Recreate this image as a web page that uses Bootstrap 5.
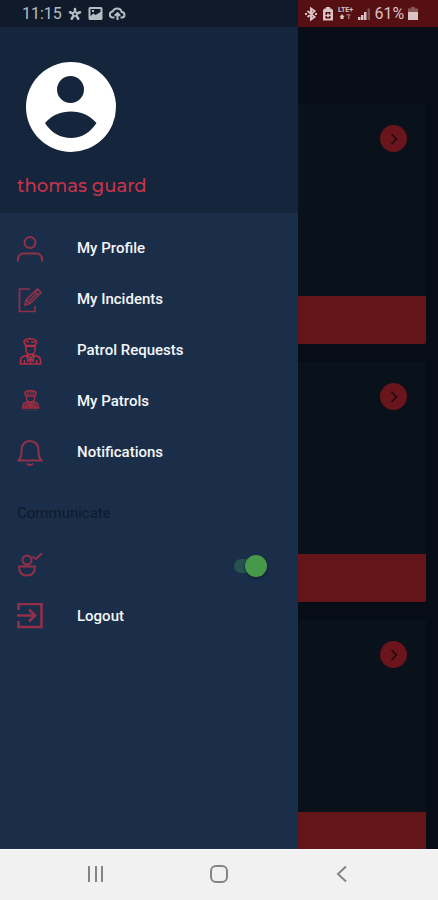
<!DOCTYPE html>
<html lang="en">
<head>
<meta charset="utf-8">
<meta name="viewport" content="width=device-width, initial-scale=1">
<title>Guard menu</title>
<link rel="stylesheet" href="https://cdn.jsdelivr.net/npm/bootstrap@5.3.0/dist/css/bootstrap.min.css">
<style>
  body { font-family: Roboto, sans-serif; background: #060d16; }
  svg { display: block; flex: none; }
  .status { height: 27px; font-size: 16px; line-height: 27px; }
  .status-left { width: 68%; background: #0f1b2a; color: #b6bcc4; padding-left: 22px; gap: 6px; }
  .status-right { background: #560f12; color: #d9c3c3; padding: 0 20px 0 6px; }
  .screen { min-height: 0; }
  .drawer { width: 68%; background: #1b2e49; }
  .drawer-head { height: 186px; padding: 35px 17px 0; background: #15253c; }
  .avatar { margin-left: 8px; }
  .user-name { margin-top: 20px; font-family: Montserrat, Inter, sans-serif; font-size: 18px; line-height: 24px; font-weight: 500; color: #c6344b; }
  .menu { padding-top: 10px; }
  .menu-row { height: 51px; padding: 0 36px 0 17px; gap: 34px; color: #f4f6f9; font-size: 15px; font-weight: 500; text-decoration: none; }
  .menu-row svg { color: #92304a; fill: none; stroke: currentColor; stroke-width: 2; }
  .menu-row .vivid { color: #b52d40; }
  .section-title { margin: 6px 0 0; height: 56px; padding-left: 17px; border-top: 1px solid #192b44; font-size: 15px; line-height: 56px; color: #0e1a2b; font-weight: 400; }
  .duty-switch { appearance: none; position: relative; width: 28px; height: 14px; margin: 0; border-radius: 7px; background: #285150; }
  .duty-switch::before { content: ""; position: absolute; right: -5px; top: -4px; width: 22px; height: 22px; border-radius: 50%; background: #46984a; box-shadow: 0 1px 3px #0f1d30; }
  .duty-switch:not(:checked)::before { right: auto; left: -5px; background: #9aa3ad; }
  .tiles { padding: 77px 12px 0 0; gap: 18px; }
  .tile { height: 240px; flex: none; background: #09111b; }
  .tile-go { width: 27px; height: 27px; margin: 21px 19px 0 0; background: #6a141b; color: #1c0a10; }
  .tile-strip { height: 48px; background: #631519; border-radius: 0 0 2px 0; }
  .sys-nav { height: 51px; background: #f1f1f1; border-top: 1px solid #fafafa; padding: 0 34px 2px; }
  .sys-nav svg { fill: none; stroke: #858585; stroke-width: 2; }
</style>
<script src="https://cdn.jsdelivr.net/npm/bootstrap@5.3.0/dist/js/bootstrap.bundle.min.js"></script>
</head>
<body class="d-flex flex-column vh-100 overflow-hidden">

<header class="status d-flex flex-shrink-0">
  <div class="status-left d-flex align-items-center">
    <span>11:15</span>
    <svg width="14" height="14" viewBox="0 0 14 14" fill="none" stroke="currentColor" stroke-width="2.600" stroke-linecap="round"><path d="M7 4.500V2M9 6.500l3-1.200M8.500 9l1.800 2.700M5.500 9l-1.800 2.700M5 6.500L2 5.300"/><circle cx="7" cy="7" r="2" stroke-width="1.500"/></svg>
    <svg width="15" height="14" viewBox="0 0 15 14"><path fill="currentColor" fill-rule="evenodd" d="M2 0h11a1.500 1.500 0 0 1 1.500 1.500v10A1.500 1.500 0 0 1 13 13H2a1.500 1.500 0 0 1-1.500-1.500v-10A1.500 1.500 0 0 1 2 0zM2.500 2v7l3-2.500 2 1.500 5-3V2zM4 3h2v2H4z"/></svg>
    <svg width="17" height="14" viewBox="0 0 17 14" fill="none" stroke="currentColor" stroke-width="2"><path d="M5.500 10.500H4a3 3 0 0 1-.3-6C4.500 2.500 6.200 1.500 8.200 1.500c2.300 0 4 1.500 4.500 3.500 3.500.2 3.800 5.200.3 5.500h-1.500M8.500 13V6.500M5.800 8.800l2.700-2.700 2.700 2.700"/></svg>
  </div>
  <div class="status-right d-flex flex-fill align-items-center justify-content-between">
    <svg width="14" height="14" viewBox="0 0 14 14" fill="none" stroke="currentColor" stroke-width="2"><path d="M3.500 4l7 6L7 12.500v-11L10.500 4l-7 6M1 7h2M11 7h2"/></svg>
    <svg width="12" height="14" viewBox="0 0 12 14"><path fill="currentColor" fill-rule="evenodd" d="M4 0h4v1.500h1.500L11 3v10.500H1V3l1.500-1.500H4zM3.500 5v3H5V6.500h2V8L8.500 7V5zM3.500 9v2.500h5V9H7v1H5V9z"/></svg>
    <svg width="16" height="15" viewBox="0 0 16 15" fill="currentColor"><text x="0" y="6" font-size="7" font-weight="700">LTE+</text><path d="M4 8l2.500 3H5.500v2h-3v-2H1.500z"/><path d="M8.500 8h4v1.500h-1V13H10V9.500H8.500z" opacity=".5"/></svg>
    <svg width="13" height="13" viewBox="0 0 13 13" fill="currentColor"><path d="M0 10h2.500v3H0zM3 8h2.500v5H3zM6 5h2.500v8H6z"/><path opacity=".35" d="M9.500 1.500h2.500V13H9.500z"/></svg>
    <span>61%</span>
    <svg width="10" height="14" viewBox="0 0 10 14" fill="currentColor"><path opacity=".4" d="M3 0h4v1.500h3V6H0V1.500h3z"/><path d="M0 5h10v8H0z"/></svg>
  </div>
</header>

<div class="screen d-flex flex-fill">
  <aside class="drawer flex-shrink-0">
    <div class="drawer-head">
      <svg class="avatar" width="92" height="92" viewBox="0 0 92 92"><circle cx="46" cy="45" r="45" fill="#fff"/><circle cx="45.500" cy="27.500" r="13.500" fill="#15253c"/><path fill="#15253c" d="M20 61c7-8 16-11.500 26-11.500S64 53 71.500 61C65 71 56 76 46 76S26 71 20 61z"/></svg>
      <div class="user-name">thomas guard</div>
    </div>
    <nav class="menu" aria-label="Main menu">
      <a class="menu-row d-flex align-items-center" href="#">
        <svg width="26" height="26" viewBox="0 0 26 26"><circle cx="13" cy="6.500" r="5.500"/><path d="M1 25.500v-2.500a5.500 5.500 0 0 1 5.500-5.500h13A5.500 5.500 0 0 1 25 23v2.500"/></svg>
        <span>My Profile</span>
      </a>
      <a class="menu-row d-flex align-items-center" href="#">
        <svg width="26" height="26" viewBox="0 0 26 26"><path stroke-width="1.700" d="M13 2H2.500v22.500H18V19M8 18l1-5L20.500 2l3.500 3.500L13 16.500zM18 4.500L21.500 8M9 13l4 3.500M12 14l8-8"/></svg>
        <span>My Incidents</span>
      </a>
      <a class="menu-row d-flex align-items-center" href="#">
        <svg class="vivid" width="26" height="28" viewBox="0 0 26 28"><g stroke-width="1.500"><path d="M7.500 6C6 4 8 2 13 1.500c5 .5 8 2.500 6 5l-1 2H8.500zM8.500 8.500c3 1.200 7 1.200 10 0M9 9v4c0 2.500 2 4.500 4.500 4.500S18 15.500 18 13V9M11 16.500v2l2.500 3 2.500-3v-2M11 18l-5 1.500c-2 .7-2.500 2-2.500 4V27h20v-3.500c0-2-.5-3.300-2.500-4L16 18M7.500 27v-4M19.500 27v-4M10 19l1 5 2.500-2.500L16 24l1-5M13.500 22v5"/><path d="M9 4.500h3M14 5h4"/></g></svg>
        <span>Patrol Requests</span>
      </a>
      <a class="menu-row d-flex align-items-center" href="#">
        <svg width="26" height="28" viewBox="0 0 26 28"><g stroke-width="1.400" color="#a32d42"><path fill="currentColor" fill-opacity=".45" d="M8 6c-1-2 1-3 5.500-3.500C18 3 20 4 19 6l-1 2H9zM5.500 20c0-3 .5-5 3-5.500l3-1 2 2 2-2 3 1c2.500.5 3 2.500 3 5.500z"/><path d="M9.500 8v2.500c0 2 1.800 3.500 4 3.500s4-1.500 4-3.500V8M10 15l1.500 3 2-2 2 2 1.500-3M13.500 16v4M9 17v3M18 17v3"/></g><path stroke-width="1" opacity=".3" d="M5 22.500h17"/></svg>
        <span>My Patrols</span>
      </a>
      <a class="menu-row d-flex align-items-center" href="#">
        <svg width="26" height="28" viewBox="0 0 26 28"><path stroke-width="2" d="M1.500 21.500C4 18.500 4.500 17 4.500 11c0-5.500 3.500-9 8.500-9s8.500 3.500 8.500 9c0 6 .5 7.500 3 10.500zM10 24.500c1.500 2 4.500 2 6 0"/></svg>
        <span>Notifications</span>
      </a>
      <h2 class="section-title">Communicate</h2>
      <label class="menu-row d-flex align-items-center justify-content-between">
        <svg width="26" height="26" viewBox="0 0 26 26"><circle cx="10" cy="7" r="4.500"/><path d="M2 13.500h16c0 5.500-2.500 9-8 9s-8-3.500-8-9zM15.500 3.500L19 6l6-6"/></svg>
        <input class="duty-switch" type="checkbox" role="switch" aria-label="On duty" checked>
      </label>
      <a class="menu-row d-flex align-items-center" href="#">
        <svg width="26" height="28" viewBox="0 0 26 28"><path stroke-width="2.600" d="M1.500 7V1h23v23h-23v-6M0 12.500h17M12 6.500l6 6-6 6"/></svg>
        <span>Logout</span>
      </a>
    </nav>
  </aside>

  <main class="tiles d-flex flex-column flex-fill overflow-hidden">
    <section class="tile d-flex flex-column justify-content-between">
      <button class="tile-go btn p-0 rounded-circle d-flex align-items-center justify-content-center align-self-end" type="button" aria-label="Open"><svg width="8" height="12" viewBox="0 0 8 12" fill="none" stroke="currentColor" stroke-width="1.500"><path d="M1.500 1l5 5-5 5"/></svg></button>
      <div class="tile-strip"></div>
    </section>
    <section class="tile d-flex flex-column justify-content-between">
      <button class="tile-go btn p-0 rounded-circle d-flex align-items-center justify-content-center align-self-end" type="button" aria-label="Open"><svg width="8" height="12" viewBox="0 0 8 12" fill="none" stroke="currentColor" stroke-width="1.500"><path d="M1.500 1l5 5-5 5"/></svg></button>
      <div class="tile-strip"></div>
    </section>
    <section class="tile d-flex flex-column justify-content-between">
      <button class="tile-go btn p-0 rounded-circle d-flex align-items-center justify-content-center align-self-end" type="button" aria-label="Open"><svg width="8" height="12" viewBox="0 0 8 12" fill="none" stroke="currentColor" stroke-width="1.500"><path d="M1.500 1l5 5-5 5"/></svg></button>
      <div class="tile-strip"></div>
    </section>
  </main>
</div>

<footer class="sys-nav d-flex flex-shrink-0 justify-content-around align-items-center">
  <button class="btn p-0 border-0" type="button" aria-label="Recent apps"><svg width="18" height="18" viewBox="0 0 18 18"><path d="M2 1v16M9 1v16M15 1v16"/></svg></button>
  <button class="btn p-0 border-0" type="button" aria-label="Home"><svg width="18" height="18" viewBox="0 0 18 18"><rect x="1" y="1" width="16" height="16" rx="5"/></svg></button>
  <button class="btn p-0 border-0" type="button" aria-label="Back"><svg width="18" height="18" viewBox="0 0 18 18"><path d="M13 1.500L5 9l8 7.500"/></svg></button>
</footer>

</body>
</html>
